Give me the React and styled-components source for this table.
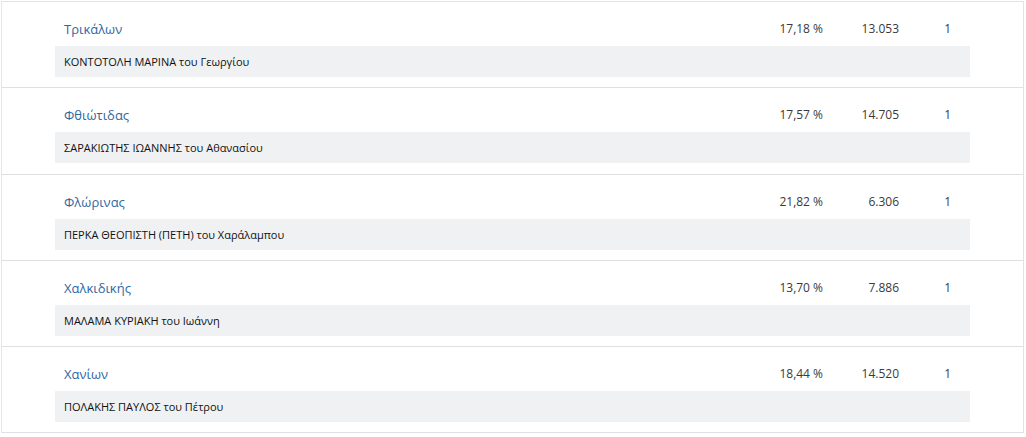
import React from "react";
import styled, { createGlobalStyle } from "styled-components";

const GlobalStyle = createGlobalStyle`
  body {
    margin: 0;
    background: #fff;
    font-family: "Open Sans", "Noto Sans", sans-serif;
  }
`;

const StyledList = styled.div`
  width: 1021px;
  margin-top: 1px;
  margin-left: 1px;
  border-left: 1px solid #e6e6e6;
  border-right: 1px solid #e3e3e3;
  border-top: 1px solid #e3e3e3;
`;

const StyledRow = styled.div`
  padding: 14px 53px 10.25px 53px;
  border-bottom: 1px solid #e0e0e0;
`;

const StyledHead = styled.div`
  display: grid;
  grid-template-columns: 1fr 100px 76px 71px;
  align-items: start;
  height: 30px;
  line-height: 26px;
  font-size: 12px;
  color: #3a3a3a;
`;

const StyledName = styled.a`
  padding-left: 9px;
  font-size: 13px;
  color: #31679f;
  text-decoration: none;
`;

const StyledNumber = styled.div`
  text-align: right;
  padding-right: ${({ pr }) => pr || 0}px;
`;

const StyledCandidate = styled.div`
  height: 31px;
  display: flex;
  align-items: center;
  padding-left: 9px;
  background: #f0f1f3;
  font-size: 11px;
  color: #111;
`;

const rows = [
  { name: "Τρικάλων", pct: "17,18 %", votes: "13.053", seats: "1", candidate: "ΚΟΝΤΟΤΟΛΗ ΜΑΡΙΝΑ του Γεωργίου" },
  { name: "Φθιώτιδας", pct: "17,57 %", votes: "14.705", seats: "1", candidate: "ΣΑΡΑΚΙΩΤΗΣ ΙΩΑΝΝΗΣ του Αθανασίου" },
  { name: "Φλώρινας", pct: "21,82 %", votes: "6.306", seats: "1", candidate: "ΠΕΡΚΑ ΘΕΟΠΙΣΤΗ (ΠΕΤΗ) του Χαράλαμπου" },
  { name: "Χαλκιδικής", pct: "13,70 %", votes: "7.886", seats: "1", candidate: "ΜΑΛΑΜΑ ΚΥΡΙΑΚΗ του Ιωάννη" },
  { name: "Χανίων", pct: "18,44 %", votes: "14.520", seats: "1", candidate: "ΠΟΛΑΚΗΣ ΠΑΥΛΟΣ του Πέτρου" },
];

const App = () => (
  <>
    <GlobalStyle />
    <StyledList>
      {rows.map((r) => (
        <StyledRow key={r.name}>
          <StyledHead>
            <StyledName href="#">{r.name}</StyledName>
            <StyledNumber>{r.pct}</StyledNumber>
            <StyledNumber>{r.votes}</StyledNumber>
            <StyledNumber pr={19}>{r.seats}</StyledNumber>
          </StyledHead>
          <StyledCandidate>{r.candidate}</StyledCandidate>
        </StyledRow>
      ))}
    </StyledList>
  </>
);

export default App;
